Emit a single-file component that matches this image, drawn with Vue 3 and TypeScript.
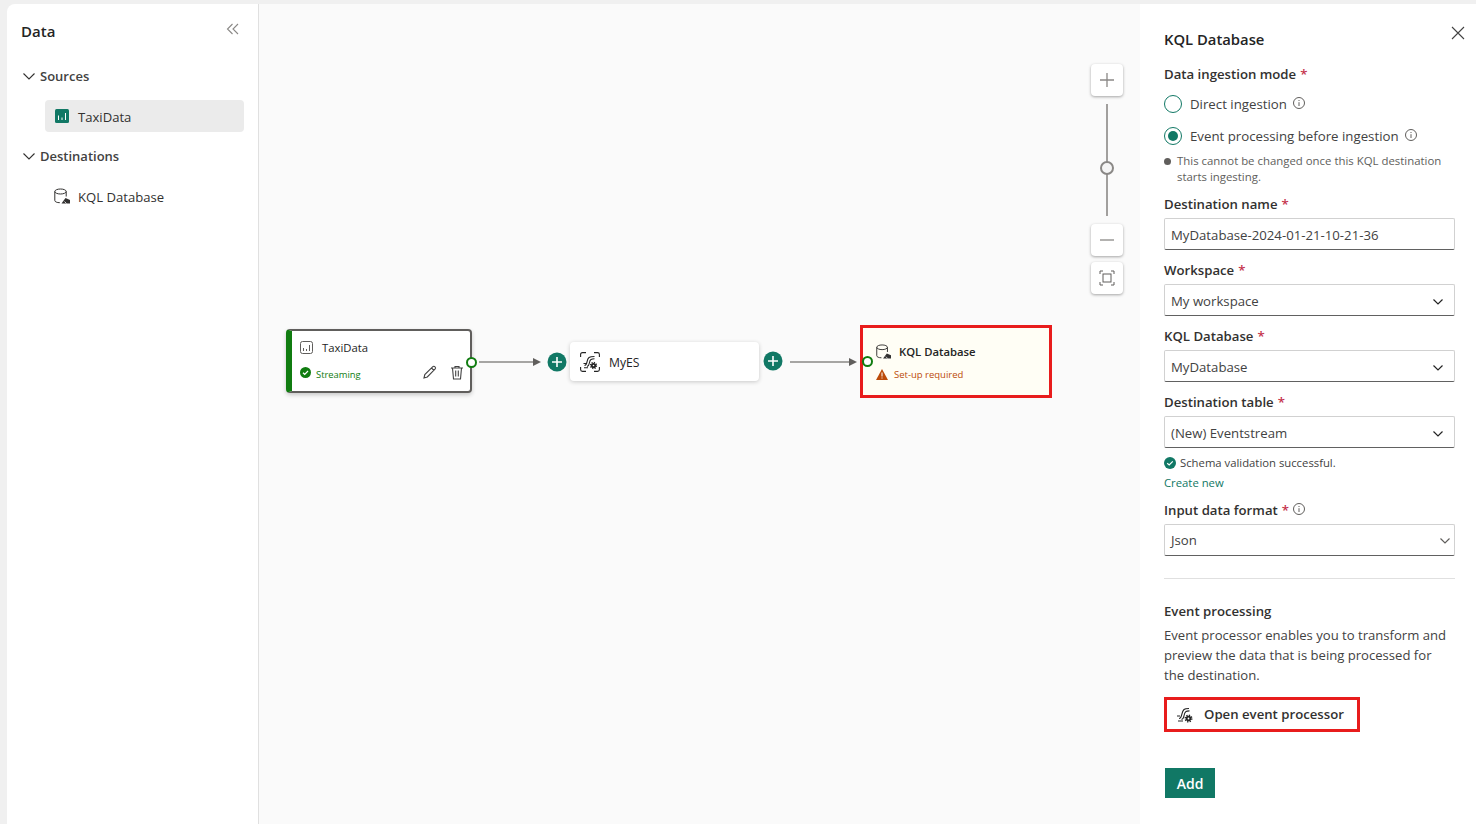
<script setup lang="ts">
interface Field { label: string; value: string; chevron: boolean }
const topFields: Field[] = [
  { label: 'Destination name', value: 'MyDatabase-2024-01-21-10-21-36', chevron: false },
  { label: 'Workspace', value: 'My workspace', chevron: true },
  { label: 'KQL Database', value: 'MyDatabase', chevron: true },
  { label: 'Destination table', value: '(New) Eventstream', chevron: true },
]
</script>

<template>
  <div class="shell">
    <aside class="left">
      <div class="left-head">
        <h2>Data</h2>
        <svg class="collapse" width="14" height="14" viewBox="0 0 14 14" fill="none" stroke="#8a8886" stroke-width="1.1"><path d="M6.5 2 1.5 7l5 5M12 2 7 7l5 5" /></svg>
      </div>
      <div class="tree-head">
        <svg width="14" height="14" viewBox="0 0 14 14" fill="none" stroke="#323130" stroke-width="1.1"><path d="M1.5 4.5 7 10l5.5-5.5" /></svg>
        <span>Sources</span>
      </div>
      <div class="tree-item selected">
        <svg width="14" height="14" viewBox="0 0 14 14"><rect width="14" height="14" rx="1.5" fill="#117865" /><path d="M3.5 6.5v4.5M7 8.5V11M10.5 4v7" stroke="#fff" stroke-width="1" /></svg>
        <span>TaxiData</span>
      </div>
      <div class="tree-head">
        <svg width="14" height="14" viewBox="0 0 14 14" fill="none" stroke="#323130" stroke-width="1.1"><path d="M1.5 4.5 7 10l5.5-5.5" /></svg>
        <span>Destinations</span>
      </div>
      <div class="tree-item db">
        <svg width="16" height="16" viewBox="0 0 16 16" fill="none" stroke="#323130"><path d="M.8 3.500v9c0 1.300 2.200 2.200 5 2.200M12.200 3.500v5" /><ellipse cx="6.500" cy="3.500" rx="5.700" ry="2.500" /><path d="m7.500 15.500 4-5.500 4.500 2v3.500z" fill="#323130" stroke="none" /><path d="m10.500 13.500 2 2" stroke="#fff" stroke-width=".8" /></svg>
        <span>KQL Database</span>
      </div>
    </aside>

    <main class="canvas">
      <div class="node source">
        <div class="node-row">
          <svg width="13" height="13" viewBox="0 0 13 13" fill="none" stroke="#605e5c"><rect x=".5" y=".5" width="12" height="12" rx="2" /><path d="M3.500 7v3M6.500 8v2M9.500 4v6" /></svg>
          <span class="node-title">TaxiData</span>
        </div>
        <div class="node-row status">
          <svg width="11" height="11" viewBox="0 0 11 11"><circle cx="5.500" cy="5.500" r="5.500" fill="#107c10" /><path d="m3 5.700 1.700 1.600L8 4" fill="none" stroke="#fff" stroke-width="1.200" /></svg>
          <span class="stream-text">Streaming</span>
          <span class="spacer"></span>
          <svg width="15" height="15" viewBox="0 0 15 15" fill="none" stroke="#424242" stroke-width="1.100"><path d="m2 13 .8-3.400L10.600 1.800a1.500 1.500 0 0 1 2.400 2.400L5.300 12z M9.500 3l2.400 2.400" /></svg>
          <svg class="trash" width="14" height="15" viewBox="0 0 14 15" fill="none" stroke="#424242" stroke-width="1.100"><path d="M1 3h12M5 3V1.500h4V3M2.500 3l1 11h7l1-11M5.700 5.500v6M8.300 5.500v6" /></svg>
        </div>
      </div>
      <span class="port port-a"></span>
      <svg class="edge edge-a" width="62" height="10" viewBox="0 0 62 10"><path d="M0 5h55" stroke="#8a8886" stroke-width="1.600" /><path d="m54 1 8 4-8 4z" fill="#605e5c" /></svg>
      <svg class="plus plus-a" width="20" height="20" viewBox="0 0 20 20"><circle cx="10" cy="10" r="9.500" fill="#117865" /><path d="M10 5v10M5 10h10" stroke="#fff" stroke-width="1.600" /></svg>

      <div class="node es">
        <svg width="20" height="20" viewBox="0 0 20 20" fill="none" stroke="#242424" stroke-width="1.100">
          <path d="M0.600 5V2.500Q.6.600 2.500.6H6M14 .6h3.500q1.900 0 1.900 1.900V5M.6 15v2.500q0 1.900 1.900 1.900H6M14 19.400h3.500q1.900 0 1.900-1.900V15" />
          <path d="M4.500 13.500c3.500 0 1.500-6 4.500-8 1.500-1 3-1 5.500-1M7 14.500c3.500-1 1.500-5.500 4-7 1-.6 2-.7 3.500-.7M4 15.800h4M3.500 11.500h2.500" />
          <circle cx="13.500" cy="13.500" r="2.600" fill="#242424" stroke="none" />
          <circle cx="13.500" cy="13.500" r="3" stroke-width="1.300" stroke-dasharray="1.200 1.150" />
          <circle cx="13.500" cy="13.500" r=".8" fill="#fff" stroke="none" />
        </svg>
        <span class="node-title es-title">MyES</span>
      </div>
      <svg class="plus plus-b" width="20" height="20" viewBox="0 0 20 20"><circle cx="10" cy="10" r="9.500" fill="#117865" /><path d="M10 5v10M5 10h10" stroke="#fff" stroke-width="1.600" /></svg>
      <svg class="edge edge-b" width="67" height="10" viewBox="0 0 67 10"><path d="M0 5h60" stroke="#8a8886" stroke-width="1.600" /><path d="m59 1 8 4-8 4z" fill="#605e5c" /></svg>

      <div class="node dest">
        <div class="node-row">
          <svg width="15" height="15" viewBox="0 0 16 16" fill="none" stroke="#323130"><path d="M.8 3.500v9c0 1.300 2.200 2.200 5 2.200M12.200 3.500v5" /><ellipse cx="6.500" cy="3.500" rx="5.700" ry="2.500" /><path d="m7.500 15.500 4-5.500 4.500 2v3.500z" fill="#323130" stroke="none" /><path d="m10.500 13.500 2 2" stroke="#fff" stroke-width=".8" /></svg>
          <span class="node-title">KQL Database</span>
        </div>
        <div class="node-row warn">
          <svg width="12" height="11" viewBox="0 0 12 11"><path d="M6 0 12 11H0z" fill="#bc4b09" /><path d="M6 3.500v4M6 8.500v1" stroke="#fff" /></svg>
          <span class="warn-text">Set-up required</span>
        </div>
      </div>
      <span class="port port-b"></span>

      <button class="zoom z-plus"><svg width="16" height="16" viewBox="0 0 16 16"><path d="M8 1v14M1 8h14" stroke="#8a8886" stroke-width="1.300" /></svg></button>
      <div class="track"><span class="thumb"></span></div>
      <button class="zoom z-minus"><svg width="16" height="16" viewBox="0 0 16 16"><path d="M1 8h14" stroke="#8a8886" stroke-width="1.300" /></svg></button>
      <button class="zoom z-fit"><svg width="16" height="16" viewBox="0 0 16 16" fill="none" stroke="#605e5c"><rect x="4" y="4" width="8" height="8" /><path d="M1 4V1h3M12 1h3v3M1 12v3h3M12 15h3v-3" /></svg></button>
    </main>

    <aside class="right">
      <svg class="close" width="14" height="14" viewBox="0 0 14 14"><path d="M1 1l12 12M13 1 1 13" stroke="#424242" stroke-width="1.100" /></svg>
      <h2 class="right-title">KQL Database</h2>

      <div class="label first">Data ingestion mode <em>*</em></div>
      <div class="radio-row one">
        <span class="radio"></span><span>Direct ingestion</span>
        <svg class="info" width="12" height="12" viewBox="0 0 12 12" fill="none" stroke="#605e5c"><circle cx="6" cy="6" r="5.500" /><path d="M6 5.200V9M6 3v1" /></svg>
      </div>
      <div class="radio-row two">
        <span class="radio on"></span><span>Event processing before ingestion</span>
        <svg class="info" width="12" height="12" viewBox="0 0 12 12" fill="none" stroke="#605e5c"><circle cx="6" cy="6" r="5.500" /><path d="M6 5.200V9M6 3v1" /></svg>
      </div>
      <div class="note">
        <span class="dot"></span>
        <p>This cannot be changed once this KQL destination starts ingesting.</p>
      </div>

      <div v-for="f in topFields" :key="f.label" class="field">
        <div class="label">{{ f.label }} <em>*</em></div>
        <div class="input">
          <span>{{ f.value }}</span>
          <svg v-if="f.chevron" width="10" height="6" viewBox="0 0 10 6" fill="none" stroke="#242424" stroke-width="1.200"><path d="m.5.500 4.500 4.500 4.500-4.500" /></svg>
        </div>
      </div>
      <div class="schema">
        <svg width="12" height="12" viewBox="0 0 12 12"><circle cx="6" cy="6" r="6" fill="#117865" /><path d="m3.200 6.200 2 1.800 3.600-3.600" fill="none" stroke="#fff" stroke-width="1.200" /></svg>
        <span>Schema validation successful.</span>
      </div>
      <a class="create">Create new</a>
      <div class="field last">
        <div class="label">Input data format <em>*</em>
          <svg class="info small" width="12" height="12" viewBox="0 0 12 12" fill="none" stroke="#605e5c"><circle cx="6" cy="6" r="5.500" /><path d="M6 5.200V9M6 3v1" /></svg>
        </div>
        <div class="input far">
          <span>Json</span>
          <svg width="10" height="6" viewBox="0 0 10 6" fill="none" stroke="#605e5c" stroke-width="1.200"><path d="m.5.500 4.500 4.500 4.500-4.500" /></svg>
        </div>
      </div>
      <hr />
      <div class="label ep">Event processing</div>
      <p class="ep-text">Event processor enables you to transform and preview the data that is being processed for the destination.</p>
      <button class="open">
        <svg width="18" height="18" viewBox="0 0 18 18" fill="none" stroke="#242424" stroke-width="1.100">
          <path d="M3 12.500c3.500 0 2-6.500 5-9 1.200-1 2.700-1 5-1M5.500 13.500c3.500-.5 1.500-6 4.500-8 .8-.5 2-.6 3.500-.6M1 10h3M2 15h5" />
          <circle cx="12.500" cy="12.500" r="2.800" fill="#242424" stroke="none" />
          <circle cx="12.500" cy="12.500" r="3.300" stroke-width="1.400" stroke-dasharray="1.300 1.290" />
          <circle cx="12.500" cy="12.500" r=".9" fill="#fff" stroke="none" />
        </svg>
        <span>Open event processor</span>
      </button>
      <button class="add">Add</button>
    </aside>
  </div>
</template>

<style>
html, body { margin: 0; background: #f0f0f0; }
</style>

<style scoped>
.shell {
  display: flex;
  height: 820px;
  padding: 4px 0 0 7px;
  overflow: hidden;
  font-family: "Open Sans", "Noto Sans", sans-serif;
  color: #242424;
  font-size: 13.3px;
}
h2 { margin: 0; font-weight: 600; }
p { margin: 0; }
em { font-style: normal; color: #c4314b; }

.left {
  width: 252px;
  flex: none;
  box-sizing: border-box;
  background: #fff;
  border-right: 1px solid #e0e0e0;
  border-top-left-radius: 8px;
  padding: 0 14px;
}
.left-head { display: flex; justify-content: space-between; height: 56px; align-items: flex-start; }
.left-head h2 { font-size: 15px; line-height: 20px; margin-top: 17px; }
.collapse { margin: 18px 4px 0 0; }
.tree-head { display: flex; align-items: center; gap: 4px; height: 32px; font-weight: 600; color: #424242; font-size: 13px; }
.tree-head svg { margin-left: 1px; }
.tree-item { display: flex; align-items: center; gap: 9px; height: 32px; margin: 8px 0 8px 24px; padding-left: 10px; border-radius: 4px; color: #323130; font-size: 13.1px; }
.tree-item span { padding-top: 1px; }
.tree-item.selected { background: #ebebeb; }
.tree-item.db { gap: 8px; padding-left: 9px; }

.canvas { position: relative; width: 881px; flex: none; background: #fafafa; }
.node { position: absolute; box-sizing: border-box; background: #fff; }
.node-row { display: flex; align-items: center; }
.node-title { font-size: 11.300px; font-weight: 600; color: #242424; }
.source { left: 27px; top: 325px; width: 186px; height: 64px; border: 2px solid #605e5c; border-left: 6px solid #107c10; border-radius: 4px; padding: 9px 7px 0 8px; box-shadow: 0 2px 4px rgba(0, 0, 0, .2); }
.source .node-title { margin-left: 9px; font-weight: 500; }
.status { margin-top: 8px; height: 18px; }
.stream-text { margin-left: 5px; margin-top: 5px; font-size: 9.400px; color: #107c10; }
.spacer { flex: 1; }
.trash { margin-left: 13px; margin-right: -1px; }
.port { position: absolute; box-sizing: border-box; width: 11px; height: 11px; border-radius: 50%; background: #fff; border: 2px solid #107c10; }
.port-a { left: 207px; top: 353px; }
.port-b { left: 603px; top: 352px; }
.edge { position: absolute; }
.edge-a { left: 220px; top: 353px; }
.edge-b { left: 531px; top: 353px; }
.plus { position: absolute; }
.plus-a { left: 288px; top: 348px; }
.plus-b { left: 504px; top: 347px; }
.es { left: 311px; top: 338px; width: 189px; height: 39px; border-radius: 4px; display: flex; align-items: center; padding-left: 10px; box-shadow: 0 1px 4px rgba(0, 0, 0, .2); }
.es-title { margin-left: 9px; margin-top: 2px; font-size: 12.200px; font-weight: 500; }
.dest { left: 601px; top: 321px; width: 192px; height: 73px; background: #fffef5; border: 3px solid #e81c1c; padding: 16px 0 0 13px; }
.dest .node-title { margin-left: 8px; }
.warn { margin-top: 9px; }
.warn-text { margin-left: 6px; font-size: 9.500px; color: #bc4b09; }
.zoom { position: absolute; left: 832px; width: 32px; height: 32px; box-sizing: border-box; background: #fff; border: 0; padding: 0; border-radius: 4px; display: flex; align-items: center; justify-content: center; box-shadow: 0 1px 3px rgba(0, 0, 0, .35); }
.z-plus { top: 60px; }
.z-minus { top: 220px; }
.z-fit { top: 258px; }
.track { position: absolute; left: 847px; top: 100px; width: 2px; height: 112px; background: #a19f9d; }
.thumb { position: absolute; left: -6px; top: 57px; box-sizing: border-box; width: 14px; height: 14px; border-radius: 50%; background: #f5f5f5; border: 2px solid #8a8886; }

.right { position: relative; width: 336px; flex: none; box-sizing: border-box; background: #fff; padding: 0 21px 0 24px; display: flex; flex-direction: column; align-items: stretch; }
.close { position: absolute; right: 11px; top: 22px; }
.right-title { font-size: 14.800px; line-height: 20px; margin-top: 25px; color: #242424; }
.label { font-size: 13.200px; font-weight: 600; line-height: 20px; color: #323130; display: flex; align-items: center; gap: 4px; }
.label.first { margin-top: 15px; }
.radio-row { display: flex; align-items: center; font-size: 13.250px; color: #424242; height: 20px; }
.radio-row.one { margin-top: 10px; }
.radio-row.two { margin-top: 12px; }
.radio { position: relative; box-sizing: border-box; width: 18px; height: 18px; border-radius: 50%; border: 1.500px solid #117865; margin: 0 8px 0 0; }
.radio.on::after { content: ""; position: absolute; left: 2.500px; top: 2.500px; width: 10px; height: 10px; border-radius: 50%; background: #117865; }
.info { margin-left: 6px; margin-top: -2px; }
.info.small { margin-left: 0; }
.note { display: flex; margin-top: 7px; margin-bottom: 9px; font-size: 11.400px; line-height: 16px; color: #605e5c; }
.dot { flex: none; width: 7px; height: 7px; margin: 5px 6px 0 0; border-radius: 50%; background: #605e5c; }
.field { margin-bottom: 10px; }
.input { box-sizing: border-box; height: 32px; margin-top: 4px; border: 1px solid #d1d1d1; border-bottom-color: #616161; padding: 1px 11px 0 6px; display: flex; align-items: center; justify-content: space-between; font-size: 13.200px; color: #424242; border-radius: 2px; }
.input svg { margin-top: 2px; }
.input.far { padding: 0 4px 0 6px; }
.schema { display: flex; align-items: center; gap: 4px; font-size: 11.300px; color: #424242; margin-top: -5px; height: 20px; }
.schema span { margin-top: -1px; }
.create { font-size: 11.300px; color: #117865; line-height: 20px; height: 20px; display: block; }
.field.last { margin-top: 7px; margin-bottom: 0; }
hr { width: 100%; box-sizing: border-box; margin: 22px 0 0; border: 0; border-top: 1px solid #e0e0e0; }
.ep { margin-top: 22px; }
.ep-text { margin-top: 4px; max-width: 286px; font-size: 13.100px; line-height: 20px; color: #424242; }
.open { box-sizing: border-box; display: flex; align-items: center; gap: 10px; width: 196px; height: 35px; margin-top: 12px; padding: 0 0 0 9px; background: #fff; border: 3px solid #e81c1c; font: inherit; font-size: 13.200px; font-weight: 600; color: #323130; }
.open span { margin-top: -1px; }
.add { width: 50px; height: 30px; margin: 36px 0 0 1px; padding: 0; border: 0; background: #117865; color: #fff; font: inherit; font-weight: 600; font-size: 14px; }
</style>
